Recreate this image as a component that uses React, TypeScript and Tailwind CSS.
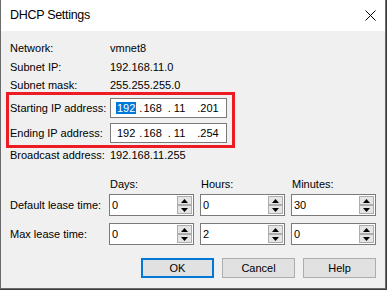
import React from "react";

const font = { fontFamily: '"Liberation Sans", Arial, sans-serif' };

const InfoRow: React.FC<{ label: string; value: string; className?: string }> = ({ label, value, className }) => (
  <div className={`flex h-[14px] items-center ${className ?? ""}`}>
    <span className="w-[100px]">{label}</span>
    <span>{value}</span>
  </div>
);

const Arrow: React.FC<{ up?: boolean }> = ({ up }) => (
  <div className="flex h-[9px] w-[15px] items-center justify-center border border-[#adadad] bg-[#e5e5e5]">
    <svg width="7" height="4" viewBox="0 0 7 4">
      {up ? <path d="M0 4 L3.5 0 L7 4 Z" fill="#000" /> : <path d="M0 0 L3.5 4 L7 0 Z" fill="#000" />}
    </svg>
  </div>
);

const Spin: React.FC<{ value: string }> = ({ value }) => (
  <div className="flex h-[22px] w-[85px] items-center border border-[#7a7a7a] bg-white pl-[2px] pr-[1px]">
    <span className="flex-1">{value}</span>
    <div className="flex flex-col">
      <Arrow up />
      <Arrow />
    </div>
  </div>
);

const IpField: React.FC<{ parts: string[]; selectFirst?: boolean }> = ({ parts, selectFirst }) => (
  <div className="flex h-[20px] w-[117px] items-center border border-[#7a7a7a] bg-white pl-[5px]">
    <span className={`px-[1px] leading-[12px] ${selectFirst ? "bg-[#0078d7] text-white" : ""}`}>{parts[0]}</span>
    <span className="ml-[3px]">.</span>
    <span className="ml-[1px]">{parts[1]}</span>
    <span className="ml-[6px]">.</span>
    <span className="ml-[3px]">{parts[2]}</span>
    <span className="ml-[12px]">.</span>
    <span>{parts[3]}</span>
  </div>
);

const Button: React.FC<{ label: string; primary?: boolean }> = ({ label, primary }) => (
  <button
    className={`flex h-[20px] w-[73px] items-center justify-center bg-[#e1e1e1] ${
      primary ? "border-2 border-[#0078d7]" : "border border-[#adadad]"
    }`}
  >
    {label}
  </button>
);

export default function App() {
  return (
    <div className="h-[290px] w-[387px] bg-[#3c3c3c]" style={font}>
      <div className="flex h-[289px] w-[386px] flex-col border-x border-b border-[#6b6b6b] bg-[#f0f0f0] text-[11px] text-black">
        {/* title bar */}
        <div className="flex h-[31px] items-center justify-between bg-white pl-[9px] pr-[8px]">
          <span className="text-[12.5px] tracking-[-0.3px]">DHCP Settings</span>
          <svg width="11" height="11" viewBox="0 0 11 11" className="mr-[1px]">
            <path d="M0.5 0.5 L10.5 10.5 M10.5 0.5 L0.5 10.5" stroke="#000" strokeWidth="1" />
          </svg>
        </div>

        <div className="flex flex-col pl-[9px] pr-[9px] pt-[10px]">
          <InfoRow label="Network:" value="vmnet8" />
          <InfoRow label="Subnet IP:" value="192.168.11.0" className="mt-[5px]" />
          <InfoRow label="Subnet mask:" value="255.255.255.0" className="mt-[4px]" />

          <div className="-ml-[4px] flex w-[229px] flex-col gap-[5px] border-[3px] border-[#ed1c24] pb-[2px] pl-[1px] pt-[3px]">
            <div className="flex items-center">
              <span className="w-[100px]">Starting IP address:</span>
              <IpField parts={["192", "168", "11", "201"]} selectFirst />
            </div>
            <div className="flex items-center">
              <span className="w-[100px]">Ending IP address:</span>
              <IpField parts={["192", "168", "11", "254"]} />
            </div>
          </div>

          <InfoRow label="Broadcast address:" value="192.168.11.255" />

          <div className="mt-[15px] flex h-[14px] items-center">
            <span className="w-[100px]" />
            <span className="w-[91px]">Days:</span>
            <span className="w-[91px]">Hours:</span>
            <span>Minutes:</span>
          </div>

          <div className="mt-[3px] flex items-center">
            <span className="w-[100px]">Default lease time:</span>
            <div className="flex gap-[6px]">
              <Spin value="0" />
              <Spin value="0" />
              <Spin value="30" />
            </div>
          </div>

          <div className="mt-[7px] flex items-center">
            <span className="w-[100px]">Max lease time:</span>
            <div className="flex gap-[6px]">
              <Spin value="0" />
              <Spin value="2" />
              <Spin value="0" />
            </div>
          </div>

          <div className="mt-[13px] flex justify-end gap-[8px]">
            <Button label="OK" primary />
            <Button label="Cancel" />
            <Button label="Help" />
          </div>
        </div>
      </div>
    </div>
  );
}
